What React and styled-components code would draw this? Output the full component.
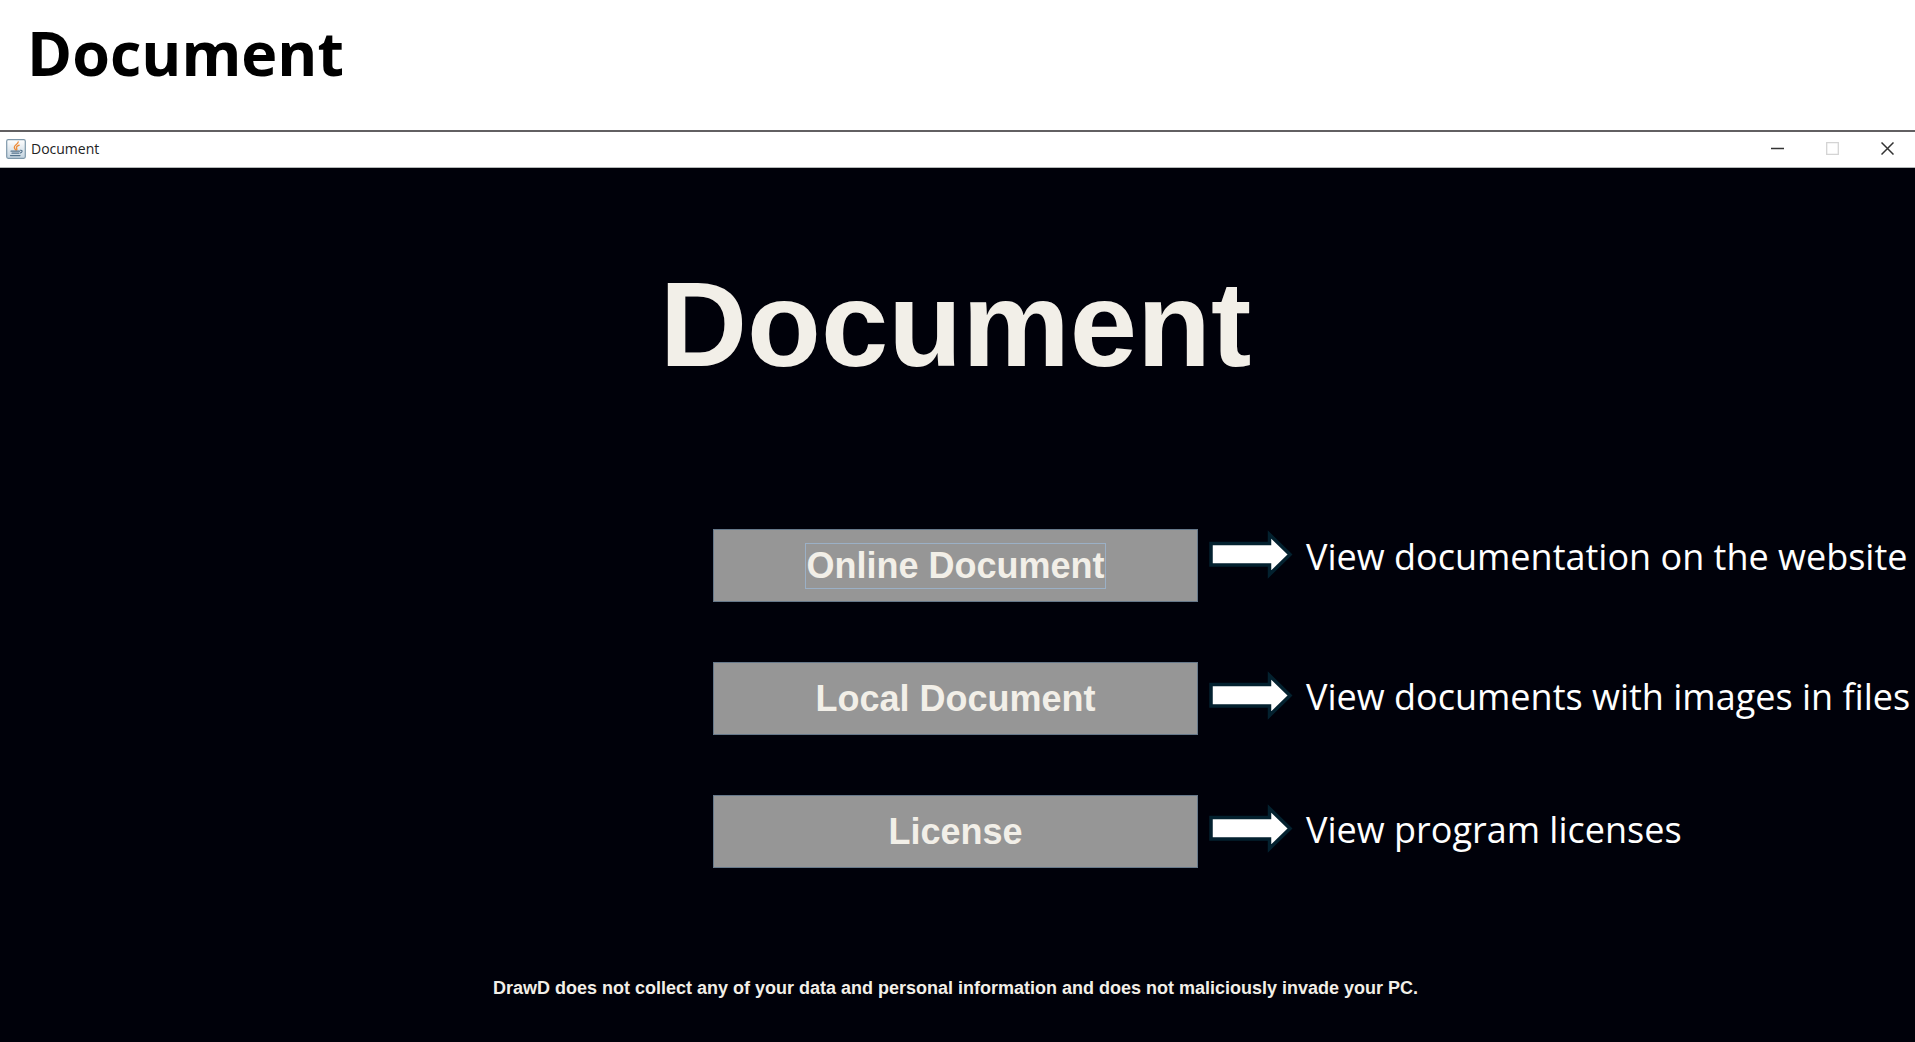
import React from 'react';
import styled, { createGlobalStyle } from 'styled-components';

const uiFont = '"Open Sans", "Noto Sans", sans-serif';
const swingFont = '"Liberation Sans", Arial, sans-serif';

const GlobalStyle = createGlobalStyle`
  *, *::before, *::after { box-sizing: border-box; }
  html, body, #root { height: 100%; }
  body { margin: 0; background: #fff; font-family: ${uiFont}; }
`;

const Page = styled.div`
  display: flex;
  flex-direction: column;
  min-height: 100%;
`;

const SlideHeader = styled.header`
  height: 130px;
  padding: 8px 27px 0;
`;

const SlideTitle = styled.h1`
  margin: 0;
  font-size: 61px;
  line-height: 90px;
  font-weight: 700;
  color: #000;
`;

const Window = styled.section`
  display: flex;
  flex: 1;
  flex-direction: column;
  border-top: 2px solid #626062;
`;

const TitleBar = styled.div`
  display: flex;
  align-items: center;
  height: 36px;
  padding: 0 0 2px 6px;
  border-bottom: 1px solid #b4b8b8;
  background: #fff;
`;

const WindowName = styled.span`
  flex: 1;
  margin-left: 5px;
  font-size: 14px;
  line-height: 20px;
  color: #222;
`;

const WindowButton = styled.button`
  display: flex;
  align-items: center;
  justify-content: center;
  width: 55px;
  height: 33px;
  padding: 0;
  border: 0;
  background: none;
  color: #333;

  &:disabled { color: #d4d4d4; }
`;

const Content = styled.main`
  display: flex;
  flex: 1;
  flex-direction: column;
  align-items: center;
  padding: 86px 4px 36px 0;
  background: #00010a;
  color: #f2efe8;
  font-family: ${swingFont};
`;

const WindowTitle = styled.h2`
  margin: 0;
  font-size: 121px;
  line-height: 140px;
  font-weight: 700;
`;

const Menu = styled.ul`
  display: flex;
  flex-direction: column;
  gap: 60px;
  width: 100%;
  margin: 135px 0 0;
  padding: 0;
  list-style: none;
`;

const MenuRow = styled.li`
  display: grid;
  grid-template-columns: minmax(0, 1fr) 485px minmax(0, 1fr);
  align-items: center;
  height: 73px;
`;

const MenuButton = styled.button`
  grid-column: 2;
  display: flex;
  align-items: center;
  justify-content: center;
  height: 73px;
  padding: 0;
  border: 1px solid #66788a;
  background: #969696;
  color: #f2efe8;
  font: 700 36px/44px ${swingFont};
`;

const ButtonLabel = styled.span`
  border: 1px solid ${({ $focused }) => ($focused ? '#9bb0c6' : 'transparent')};
`;

const Note = styled.p`
  display: flex;
  align-items: center;
  align-self: ${({ $align }) => $align || 'center'};
  gap: 13px;
  margin: 0;
  padding: 0 0 4px 11px;
  font: 400 36px/53px ${uiFont};
  color: #fff;
  white-space: nowrap;
`;

const Arrow = styled.svg`
  flex: none;
  width: 84px;
  height: 50px;
  margin-bottom: 4px;
`;

const Notice = styled.p`
  margin: 108px 0 0;
  font-size: 18px;
  line-height: 24px;
  font-weight: 700;
`;

function JavaIcon() {
  return (
    <svg width="20" height="20" viewBox="0 0 20 20" fill="none" aria-hidden="true">
      <defs>
        <linearGradient id="tile" x1="0" y1="0" x2="0" y2="1">
          <stop offset="0" stopColor="#ffffff" />
          <stop offset="1" stopColor="#c3d3df" />
        </linearGradient>
      </defs>
      <rect x="0.7" y="0.7" width="18.6" height="18.6" rx="1.5" fill="url(#tile)" stroke="#7e98aa" strokeWidth="1.2" />
      <path d="M12.2 3C12 5.5 8 6.3 8.3 8.4c.1 1 .9 1.5 1.2 2.5M13.2 6.2c-1.5.6-3 1.5-2.7 2.8.2.7.8 1.1.1 2" stroke="#ee8a35" strokeWidth="1.3" strokeLinecap="round" />
      <path d="M5 12.2h8.5M6 14.2h6.8M4.5 16.6h9.5" stroke="#54738c" strokeWidth="1.2" strokeLinecap="round" />
      <path d="M14 11.3c3-.6 2.8 2.2-.2 2.8" stroke="#54738c" strokeWidth="1.1" />
    </svg>
  );
}

function RightArrow() {
  return (
    <Arrow viewBox="0 0 84 50" aria-hidden="true">
      <path
        d="M2 14.5H60.5V5.5L81 25.5L60.5 45.5V36H2Z"
        fill="#fff"
        stroke="#03212f"
        strokeWidth="3.5"
      />
    </Arrow>
  );
}

const items = [
  { label: 'Online Document', note: 'View documentation on the website', focused: true, align: 'start' },
  { label: 'Local Document', note: 'View documents with images in files' },
  { label: 'License', note: 'View program licenses' },
];

export default function App() {
  return (
    <Page>
      <GlobalStyle />
      <SlideHeader>
        <SlideTitle>Document</SlideTitle>
      </SlideHeader>
      <Window>
        <TitleBar>
          <JavaIcon />
          <WindowName>Document</WindowName>
          <WindowButton type="button" aria-label="Minimize">
            <svg width="13" height="13" stroke="currentColor" strokeWidth="1.5"><path d="M0 6.5H13" /></svg>
          </WindowButton>
          <WindowButton type="button" aria-label="Maximize" disabled>
            <svg width="13" height="13" fill="none" stroke="currentColor" strokeWidth="1.3"><path d="M.7.7H12.3V12.3H.7Z" /></svg>
          </WindowButton>
          <WindowButton type="button" aria-label="Close">
            <svg width="13" height="13" stroke="currentColor" strokeWidth="1.5"><path d="M.5.5L12.5 12.5M12.5.5L.5 12.5" /></svg>
          </WindowButton>
        </TitleBar>
        <Content>
          <WindowTitle>Document</WindowTitle>
          <Menu>
            {items.map(({ label, note, focused, align }) => (
              <MenuRow key={label}>
                <MenuButton type="button">
                  <ButtonLabel $focused={focused}>{label}</ButtonLabel>
                </MenuButton>
                <Note $align={align}>
                  <RightArrow />
                  {note}
                </Note>
              </MenuRow>
            ))}
          </Menu>
          <Notice>DrawD does not collect any of your data and personal information and does not maliciously invade your PC.</Notice>
        </Content>
      </Window>
    </Page>
  );
}
